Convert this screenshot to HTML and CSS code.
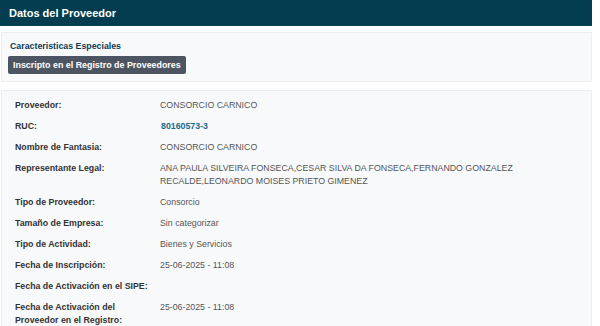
FILE: index.html
```html
<!DOCTYPE html>
<html lang="es">
<head>
<meta charset="utf-8">
<title>Datos del Proveedor</title>
<link rel="stylesheet" href="styles.css">
</head>
<body>
<div class="page">
  <div class="header">Datos del Proveedor</div>
  <div class="card special">
    <div class="special-title">Caracteristicas Especiales</div>
    <span class="badge">Inscripto en el Registro de Proveedores</span>
  </div>
  <div class="card details">
    <div class="row"><div class="label">Proveedor:</div><div class="value">CONSORCIO CARNICO</div></div>
    <div class="row"><div class="label">RUC:</div><div class="value link">80160573-3</div></div>
    <div class="row"><div class="label">Nombre de Fantasia:</div><div class="value">CONSORCIO CARNICO</div></div>
    <div class="row"><div class="label">Representante Legal:</div><div class="value">ANA PAULA SILVEIRA FONSECA,CESAR SILVA DA FONSECA,FERNANDO GONZALEZ RECALDE,LEONARDO MOISES PRIETO GIMENEZ</div></div>
    <div class="row"><div class="label">Tipo de Proveedor:</div><div class="value">Consorcio</div></div>
    <div class="row"><div class="label">Tamaño de Empresa:</div><div class="value">Sin categorizar</div></div>
    <div class="row"><div class="label">Tipo de Actividad:</div><div class="value">Bienes y Servicios</div></div>
    <div class="row"><div class="label">Fecha de Inscripción:</div><div class="value">25-06-2025 - 11:08</div></div>
    <div class="row"><div class="label">Fecha de Activación en el SIPE:</div><div class="value"></div></div>
    <div class="row"><div class="label">Fecha de Activación del Proveedor en el Registro:</div><div class="value">25-06-2025 - 11:08</div></div>
  </div>
</div>
</body>
</html>
```

FILE: styles.css
```css
html, body {
  margin: 0;
  padding: 0;
  background: #ffffff;
  overflow: hidden;
}
body {
  font-family: "Liberation Sans", Arial, sans-serif;
  font-size: 8.8px;
  color: #333;
}
.page {
  width: 592px;
  height: 326px;
  overflow: hidden;
}
.header {
  background: #033d4f;
  color: #fff;
  font-weight: bold;
  font-size: 11px;
  height: 26px;
  line-height: 26px;
  padding-left: 9px;
}
.card {
  background: #f8f9fb;
  border: 1px solid #eceef0;
  margin-left: 1px;
}
.special {
  margin-top: 6px;
  padding: 8px 6px 8px 6px;
  height: 32px;
}
.special-title {
  color: #0e3b50;
  font-weight: bold;
  font-size: 8.8px;
  line-height: 11px;
  padding-left: 2px;
}
.badge {
  display: inline-block;
  margin-top: 4px;
  background: #4c5561;
  color: #fff;
  font-weight: bold;
  font-size: 8.9px;
  line-height: 18px;
  padding: 0 5px;
  border-radius: 2px;
}
.details {
  margin-top: 8px;
  padding: 8px 13px 0 13px;
  height: 300px;
  border-bottom: none;
}
.row {
  display: flex;
  line-height: 13px;
  margin-bottom: 8px;
}
.label {
  width: 145px;
  flex: none;
  font-weight: bold;
  color: #333;
  padding-right: 8px;
  box-sizing: border-box;
}
.value {
  flex: 1;
  color: #555;
}
.value.link {
  color: #1b6a8c;
  font-weight: bold;
  padding-left: 1px;
}
```
